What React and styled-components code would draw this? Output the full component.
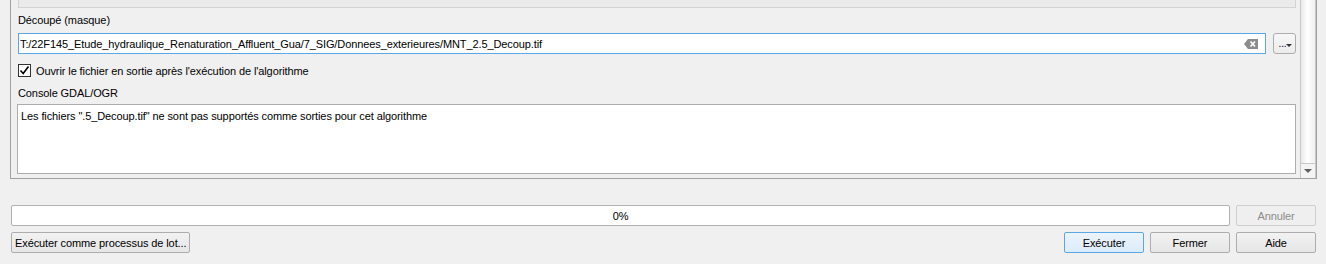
import React from "react";
import styled, { createGlobalStyle } from "styled-components";

const Global = createGlobalStyle`
  html, body { margin: 0; padding: 0; background: #f0f0f0; }
  body { font-family: "Liberation Sans", Arial, sans-serif; font-size: 11px; letter-spacing: -0.1px; color: #000; }
  * { box-sizing: border-box; }
`;

const Page = styled.div`
  width: 1326px;
  height: 264px;
  display: flex;
  flex-direction: column;
  overflow: hidden;
`;

const ScrollArea = styled.div`
  margin-left: 10px;
  width: 1307px;
  height: 179px;
  border: 1px solid #a0a0a0;
  border-top: none;
  display: flex;
`;

const Content = styled.div`
  flex: 1;
  padding: 0 4px 0 7px;
  display: flex;
  flex-direction: column;
`;

const PrevBox = styled.div`
  height: 8px;
  background: #ebebeb;
  border: 1px solid #d3d3d3;
  border-top: none;
`;

const Label = styled.div`
  height: 13px;
  line-height: 13px;
  margin-top: ${(p) => p.$top}px;
  white-space: nowrap;
`;

const FileRow = styled.div`
  margin-top: 6px;
  display: flex;
  gap: 7px;
  height: 21px;
`;

const Input = styled.div`
  flex: 1;
  height: 21px;
  border: 1px solid #5aa7e8;
  background: #fff;
  display: flex;
  align-items: center;
  padding: 0 7px 0 1px;
  white-space: nowrap;
`;

const InputText = styled.span`
  flex: 1;
  overflow: hidden;
`;

const SmallButton = styled.div`
  width: 23px;
  height: 21px;
  border: 1px solid #adadad;
  border-radius: 3px;
  background: linear-gradient(#f7f7f7, #ececec);
  position: relative;
  display: flex;
  align-items: center;
  justify-content: center;
  padding-right: 4px;
  font-size: 10px;
`;

const DropTri = styled.span`
  position: absolute;
  right: 3px;
  bottom: 6px;
  width: 0;
  height: 0;
  border-left: 3px solid transparent;
  border-right: 3px solid transparent;
  border-top: 3px solid #333;
`;

const CheckRow = styled.div`
  margin-top: 10px;
  height: 13px;
  display: flex;
  align-items: center;
  gap: 5px;
`;

const CheckBox = styled.div`
  width: 13px;
  height: 13px;
  border: 1px solid #333;
  background: #fff;
  display: flex;
  align-items: center;
  justify-content: center;
`;

const TextArea = styled.div`
  margin-top: 4px;
  height: 70px;
  border: 1px solid #adadad;
  background: #fff;
  padding: 5px 3px;
  line-height: 13px;
  margin-left: -1px;
`;

const ScrollBar = styled.div`
  width: 16px;
  border-left: 1px solid #c8c8c8;
  border-right: 1px solid #c8c8c8;
  display: flex;
  flex-direction: column;
`;

const Thumb = styled.div`
  flex: 1;
  background: linear-gradient(to right, #e8e8e8, #ffffff 45%, #f0f0f0);
  border-bottom: 1px solid #c8c8c8;
`;

const Arrow = styled.div`
  height: 14px;
  display: flex;
  align-items: center;
  justify-content: center;
  background: #f4f4f4;
`;

const ArrowTri = styled.span`
  width: 0;
  height: 0;
  border-left: 4px solid transparent;
  border-right: 4px solid transparent;
  border-top: 4px solid #606060;
`;

const BottomRow = styled.div`
  margin-top: ${(p) => p.$top}px;
  padding: 0 10px 0 11px;
  display: flex;
  gap: 6px;
  height: 21px;
`;

const Progress = styled.div`
  flex: 1;
  border: 1px solid #b0b0b0;
  border-radius: 2px;
  background: #fff;
  display: flex;
  align-items: center;
  justify-content: center;
`;

const Button = styled.div`
  width: ${(p) => p.$w}px;
  height: 21px;
  border: 1px solid ${(p) => (p.$default ? "#5aa7e8" : p.$disabled ? "#cfcfcf" : "#adadad")};
  border-radius: 2px;
  background: ${(p) =>
    p.$default ? "linear-gradient(#ecf4fc, #dcecfc)" : p.$disabled ? "#efefef" : "linear-gradient(#f2f2f2, #e6e6e6)"};
  color: ${(p) => (p.$disabled ? "#8c8c8c" : "#000")};
  display: flex;
  align-items: center;
  justify-content: ${(p) => (p.$left ? "flex-start" : "center")};
  padding: 0 ${(p) => (p.$left ? "3px" : "0")};
  white-space: nowrap;
`;

const Spacer = styled.div`
  flex: 1;
`;

const ClearIcon = () => (
  <svg width="14" height="10" viewBox="0 0 14 10">
    <path d="M4 0 H14 V10 H4 L0 5 Z" fill="#8c8c8c" />
    <path d="M6.5 2.5 L11 7.5 M11 2.5 L6.5 7.5" stroke="#fff" strokeWidth="1.6" />
  </svg>
);

const Check = () => (
  <svg width="11" height="11" viewBox="0 0 11 11">
    <path d="M1.5 5.5 L4.2 8.5 L9.5 1.5" stroke="#000" strokeWidth="1.6" fill="none" />
  </svg>
);

export default function App() {
  return (
    <Page>
      <Global />
      <ScrollArea>
        <Content>
          <PrevBox />
          <Label $top={6}>Découpé (masque)</Label>
          <FileRow>
            <Input>
              <InputText>
                T:/22F145_Etude_hydraulique_Renaturation_Affluent_Gua/7_SIG/Donnees_exterieures/MNT_2.5_Decoup.tif
              </InputText>
              <ClearIcon />
            </Input>
            <SmallButton>
              ...
              <DropTri />
            </SmallButton>
          </FileRow>
          <CheckRow>
            <CheckBox>
              <Check />
            </CheckBox>
            <span>Ouvrir le fichier en sortie après l'exécution de l'algorithme</span>
          </CheckRow>
          <Label $top={10}>Console GDAL/OGR</Label>
          <TextArea>Les fichiers ".5_Decoup.tif" ne sont pas supportés comme sorties pour cet algorithme</TextArea>
        </Content>
        <ScrollBar>
          <Thumb />
          <Arrow>
            <ArrowTri />
          </Arrow>
        </ScrollBar>
      </ScrollArea>
      <BottomRow $top={26}>
        <Progress>0%</Progress>
        <Button $w={80} $disabled>
          Annuler
        </Button>
      </BottomRow>
      <BottomRow $top={6}>
        <Button $left>Exécuter comme processus de lot...</Button>
        <Spacer />
        <Button $w={80} $default>
          Exécuter
        </Button>
        <Button $w={80}>Fermer</Button>
        <Button $w={80}>Aide</Button>
      </BottomRow>
    </Page>
  );
}
